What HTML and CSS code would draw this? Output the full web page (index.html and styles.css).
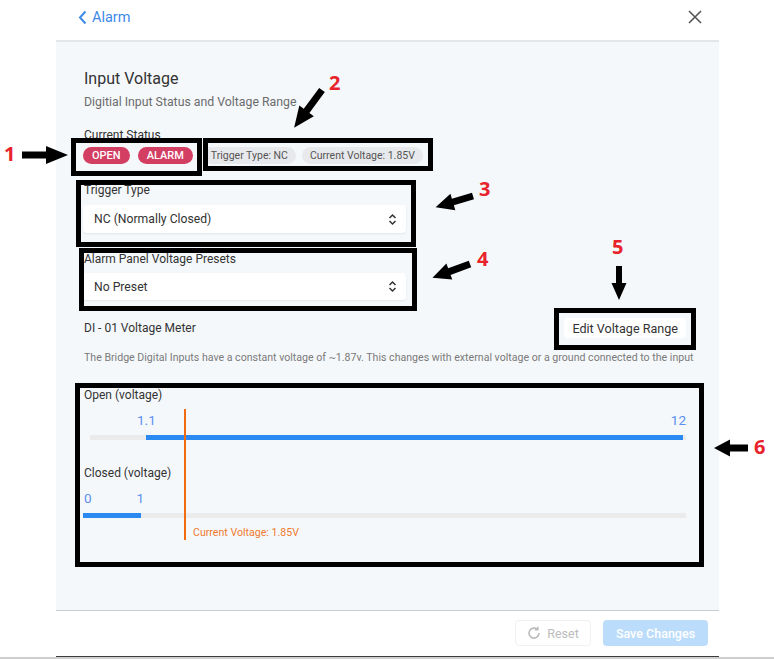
FILE: index.html
```html
<!DOCTYPE html>
<html lang="en">

<head>
    <meta charset="UTF-8">
    <meta name="viewport" content="width=device-width, initial-scale=1.0">
    <title>Alarm - Input Voltage</title>
    <link rel="stylesheet" href="styles.css">
</head>

<body>

    <!-- Top bar -->
    <header class="topbar">
        <a class="back" href="#">
            <svg width="9" height="15" viewBox="0 0 9 15"><polyline points="7.5,1.5 2,7.5 7.5,13.5" fill="none" stroke="#3d8ae8" stroke-width="2" /></svg>
            <span>Alarm</span>
        </a>
        <a class="close" href="#">
            <svg width="14" height="14" viewBox="0 0 14 14"><path d="M1 1 L13 13 M13 1 L1 13" stroke="#555" stroke-width="1.6" /></svg>
        </a>
    </header>

    <!-- Settings panel -->
    <main class="panel">
        <h1>Input Voltage</h1>
        <p class="subtitle">Digitial Input Status and Voltage Range</p>

        <div class="label status-label">Current Status</div>
        <div class="status-row">
            <span class="badge">OPEN</span>
            <span class="badge">ALARM</span>
            <span class="chip chip-first">Trigger Type: NC</span>
            <span class="chip">Current Voltage: 1.85V</span>
        </div>

        <div class="label field-label">Trigger Type</div>
        <div class="select">
            <span>NC (Normally Closed)</span>
            <svg width="9" height="13" viewBox="0 0 9 13"><polyline points="1.5,5 4.5,2 7.5,5" fill="none" stroke="#333" stroke-width="1.5" /><polyline points="1.5,8 4.5,11 7.5,8" fill="none" stroke="#333" stroke-width="1.5" /></svg>
        </div>

        <div class="label field-label">Alarm Panel Voltage Presets</div>
        <div class="select select-short">
            <span>No Preset</span>
            <svg width="9" height="13" viewBox="0 0 9 13"><polyline points="1.5,5 4.5,2 7.5,5" fill="none" stroke="#333" stroke-width="1.5" /><polyline points="1.5,8 4.5,11 7.5,8" fill="none" stroke="#333" stroke-width="1.5" /></svg>
        </div>

        <div class="meter-head">
            <span class="label">DI - 01 Voltage Meter</span>
            <button class="edit-btn">Edit Voltage Range</button>
        </div>
        <p class="note">The Bridge Digital Inputs have a constant voltage of ~1.87v. This changes with external voltage or a ground connected to the input</p>

        <div class="meter">
            <div class="label">Open (voltage)</div>
            <div class="values">
                <span class="v-min">1.1</span>
                <span class="v-max">12</span>
            </div>
            <div class="track track-open">
                <div class="fill fill-open"></div>
            </div>

            <div class="label closed-label">Closed (voltage)</div>
            <div class="values">
                <span>0</span>
                <span class="v-one">1</span>
            </div>
            <div class="track">
                <div class="fill fill-closed"></div>
            </div>

            <div class="current">Current Voltage: 1.85V</div>
            <div class="marker"></div>
        </div>
    </main>

    <!-- Footer actions -->
    <footer class="actions">
        <button class="reset-btn">
            <svg width="14" height="14" viewBox="0 0 14 14"><path d="M12 7 A5 5 0 1 1 10.3 3.3" fill="none" stroke="#bbb" stroke-width="1.6" /><polyline points="10.8,0.8 10.8,3.8 7.8,3.8" fill="none" stroke="#bbb" stroke-width="1.6" /></svg>
            Reset
        </button>
        <button class="save-btn">Save Changes</button>
    </footer>
    <div class="page-edge"></div>

    <!-- Annotation overlay -->
    <div class="notes">
        <div class="box box-1"></div>
        <div class="box box-2"></div>
        <div class="box box-3"></div>
        <div class="box box-4"></div>
        <div class="box box-5"></div>
        <div class="box box-6"></div>

        <span class="num num-1">1</span>
        <span class="num num-2">2</span>
        <span class="num num-3">3</span>
        <span class="num num-4">4</span>
        <span class="num num-5">5</span>
        <span class="num num-6">6</span>

        <svg class="arrows" width="774" height="659" viewBox="0 0 774 659">
            <polygon transform="translate(22,155)" points="0,-3.5 24,-3.5 24,-9 46,0 24,9 24,3.5 0,3.5" />
            <polygon transform="translate(322,90) rotate(126.4)" points="0,-3.5 26,-3.5 26,-9 47,0 26,9 26,3.5 0,3.5" />
            <polygon transform="translate(473,196) rotate(163.4)" points="0,-3.5 21,-3.5 21,-8.5 39,0 21,8.5 21,3.5 0,3.5" />
            <polygon transform="translate(470,264) rotate(159.8)" points="0,-3.5 22,-3.5 22,-8.5 40,0 22,8.5 22,3.5 0,3.5" />
            <polygon transform="translate(619,266) rotate(90)" points="0,-3 17,-3 17,-7.5 34,0 17,7.5 17,3 0,3" />
            <polygon transform="translate(748,448) rotate(180)" points="0,-3.5 18,-3.5 18,-8.5 34,0 18,8.5 18,3.5 0,3.5" />
        </svg>
    </div>

</body>

</html>
```

FILE: styles.css
```css
/* Basic Reset */
body,
h1,
p,
button {
    margin: 0;
    padding: 0;
    font-family: 'Roboto', 'Liberation Sans', sans-serif;
}

body {
    width: 774px;
    height: 659px;
    background: #fff;
    color: #333;
    position: relative;
    overflow: hidden;
}

a {
    text-decoration: none;
}

/* Top bar */
.topbar {
    height: 34px;
    padding: 0 72px 6px 78px;
    display: flex;
    align-items: center;
    justify-content: space-between;
}

.back {
    display: flex;
    align-items: center;
    gap: 5px;
    color: #3d8ae8;
    font-size: 14.5px;
}

.close {
    display: flex;
}

/* Panel */
.panel {
    box-sizing: border-box;
    height: 571px;
    margin: 0 55px 0 56px;
    padding: 27px 33px 0 28px;
    background: #f5f8fb;
    border-top: 2px solid #e5e6e8;
    border-bottom: 1px solid #c9cdd2;
    position: relative;
}

h1 {
    font-size: 16px;
    font-weight: 400;
    line-height: 20px;
    color: #333;
}

.subtitle {
    margin-top: 5px;
    font-size: 12.3px;
    line-height: 16px;
    color: #6b6b6b;
}

.label {
    font-size: 12px;
    line-height: 16px;
    color: #333;
}

.status-label {
    margin-top: 17px;
}

.status-row {
    margin-top: 4px;
    display: flex;
    align-items: center;
    margin-left: -1px;
}

.badge {
    height: 17px;
    padding: 0 9px;
    margin-right: 8px;
    border-radius: 9px;
    background: #d33e63;
    color: #fff;
    font-size: 11px;
    font-weight: 500;
    line-height: 17px;
}

.chip {
    height: 17px;
    padding: 0 8px;
    margin-right: 6px;
    border-radius: 9px;
    background: #e7e9ec;
    color: #555;
    font-size: 10.5px;
    line-height: 17px;
}

.chip-first {
    margin-left: 2px;
}

.field-label {
    margin-top: 18px;
}

.select {
    box-sizing: border-box;
    height: 28px;
    margin-top: 7px;
    margin-left: -1px;
    width: 323px;
    padding: 0 9px 0 11px;
    background: #fff;
    border-radius: 4px;
    box-shadow: 0 1px 2px rgba(0, 0, 0, 0.08);
    display: flex;
    align-items: center;
    justify-content: space-between;
    font-size: 12.2px;
    color: #333;
}

.select-short {
    height: 27px;
    margin-top: 6px;
}

/* Meter */
.meter-head {
    margin-top: 18px;
    display: flex;
    align-items: center;
    justify-content: space-between;
}

.edit-btn {
    height: 20px;
    padding: 0 8px;
    border: none;
    border-radius: 4px;
    background: #fff;
    color: #333;
    font-size: 12.6px;
}

.note {
    margin-top: 13px;
    font-size: 10.6px;
    line-height: 14px;
    color: #7a7a7a;
    white-space: nowrap;
}

.meter {
    margin-top: 22px;
    position: relative;
}

.values {
    margin-top: 9px;
    display: flex;
    font-size: 13.5px;
    line-height: 16px;
    color: #5a8ff0;
}

.v-min {
    margin-left: 53px;
}

.v-max {
    margin-left: auto;
}

.v-one {
    margin-left: 45px;
}

.track {
    margin-top: 7px;
    margin-left: -1px;
    height: 5px;
    background: #ebebeb;
}

.track-open {
    margin-left: 6px;
}

.fill {
    height: 5px;
    background: #2a8af2;
}

.fill-open {
    margin-left: 56px;
    width: 537px;
}

.fill-closed {
    width: 58px;
}

.closed-label {
    margin-top: 25px;
}

.current {
    margin-top: 8px;
    margin-left: 109px;
    font-size: 10.6px;
    line-height: 14px;
    color: #f07a2e;
}

.marker {
    position: absolute;
    left: 100px;
    top: 22px;
    width: 2px;
    height: 131px;
    background: #f26b10;
}

/* Footer */
.actions {
    box-sizing: border-box;
    height: 46px;
    margin: 0 55px 0 56px;
    padding: 9px 11px 0 0;
    display: flex;
    justify-content: flex-end;
    align-items: flex-start;
    gap: 12px;
    border-bottom: 1px solid #3a3a3a;
}

.reset-btn {
    height: 26px;
    width: 76px;
    border: 1px solid #f0f0f0;
    border-radius: 4px;
    background: #fff;
    color: #bcbcbc;
    font-size: 12.5px;
    display: flex;
    align-items: center;
    justify-content: center;
    gap: 6px;
}

.save-btn {
    height: 26px;
    width: 105px;
    border: none;
    border-radius: 4px;
    background: #bcdcfb;
    color: #fff;
    font-size: 12.5px;
    font-weight: 500;
}

.page-edge {
    height: 3px;
    background: #cfcfcf;
}

/* Annotations */
.notes {
    position: absolute;
    left: 0;
    top: 0;
    width: 774px;
    height: 659px;
    pointer-events: none;
}

.box {
    position: absolute;
    box-sizing: border-box;
    border: 5px solid #000;
}

.box-1 { left: 71px; top: 138px; width: 131px; height: 38px; }
.box-2 { left: 203px; top: 138px; width: 230px; height: 33px; }
.box-3 { left: 76px; top: 180px; width: 340px; height: 67px; }
.box-4 { left: 79px; top: 248px; width: 338px; height: 63px; }
.box-5 { left: 554px; top: 308px; width: 142px; height: 42px; }
.box-6 { left: 75px; top: 383px; width: 629px; height: 184px; }

.arrows {
    position: absolute;
    left: 0;
    top: 0;
}

.arrows polygon {
    fill: #000;
}

.num {
    position: absolute;
    font-family: 'Open Sans', 'Liberation Sans', sans-serif;
    font-weight: 700;
    font-size: 20px;
    line-height: 20px;
    color: #e8232b;
}

.num-1 { left: 4px; top: 144px; }
.num-2 { left: 329px; top: 73px; }
.num-3 { left: 479px; top: 179px; }
.num-4 { left: 477px; top: 249px; }
.num-5 { left: 612px; top: 237px; }
.num-6 { left: 754px; top: 437px; }
```
